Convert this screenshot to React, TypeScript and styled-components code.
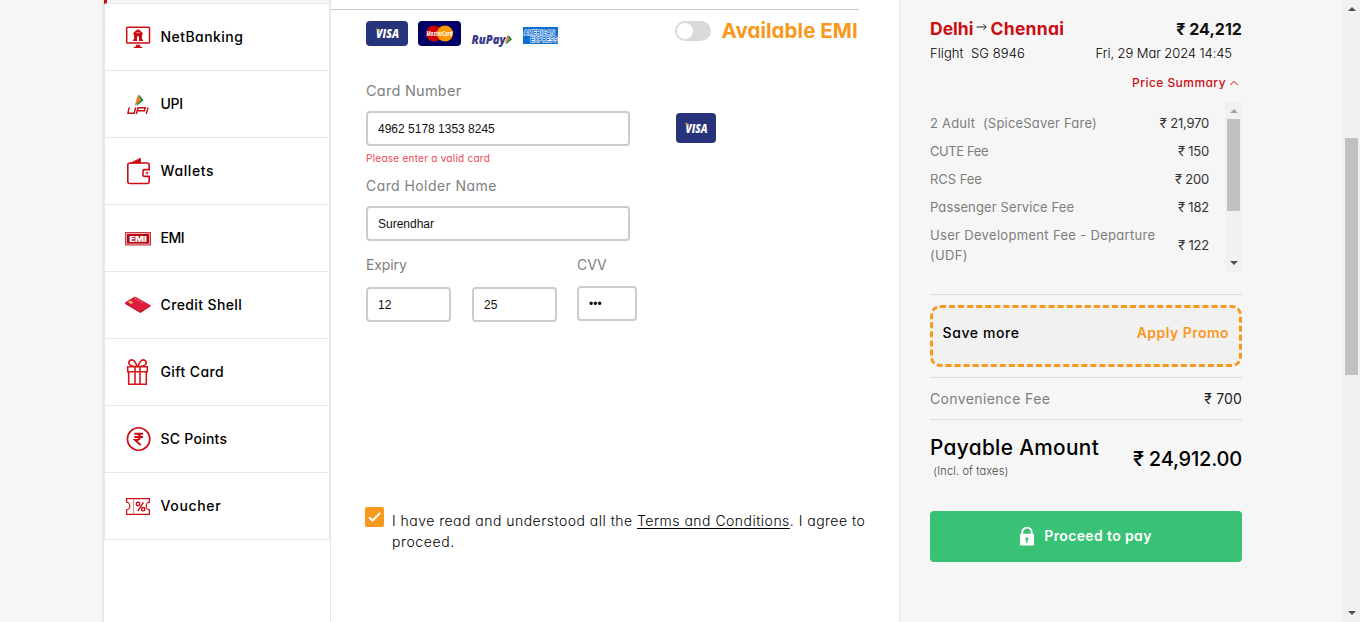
import React from "react";
import styled, { createGlobalStyle } from "styled-components";

const RED = "#cb0d14";
const ORANGE = "#f8981d";

const Global = createGlobalStyle`
  * { box-sizing: border-box; }
  html, body { margin: 0; padding: 0; overflow: hidden; }
  body {
    background: #f6f6f6;
    font-family: Inter, "Open Sans", sans-serif;
    font-feature-settings: "cv11";
    color: #222;
  }
  svg { overflow: visible; }
`;

const Text = styled.span<{
  $size?: number;
  $weight?: number;
  $color?: string;
  $ls?: number;
  $lh?: number;
}>`
  display: inline-block;
  white-space: pre;
  font-size: ${(p) => p.$size ?? 14}px;
  font-weight: ${(p) => p.$weight ?? 400};
  color: ${(p) => p.$color ?? "#222"};
  letter-spacing: ${(p) => p.$ls ?? 0}px;
  line-height: ${(p) => p.$lh ?? 20}px;
`;

const Page = styled.div`
  display: flex;
  width: 1360px;
  height: 622px;
  padding-left: 102px;
  overflow: hidden;
`;

const Sidebar = styled.nav`
  flex: none;
  width: 229px;
  border-left: 2px solid #e8e8e8;
  border-right: 1px solid #e8e8e8;
  background: #fff;
`;

const ActiveTabEdge = styled.div`
  height: 4px;
  background: #f5f5f5;
  border-left: 3px solid ${RED};
  border-right: 1px solid #e8e8e8;
  border-bottom: 1px solid #e8e8e8;
`;

const NavItem = styled.a`
  display: flex;
  align-items: center;
  height: 67px;
  padding-left: 19px;
  border: solid #e8e8e8;
  border-width: 0 1px 1px;
`;

const NavIcon = styled.span`
  display: flex;
  width: 28px;
  height: 28px;
  margin-right: 8.5px;
`;

const Main = styled.main`
  flex: none;
  width: 568px;
  background: #fff;
`;

const TopRule = styled.hr`
  width: 528px;
  height: 1px;
  margin: 9px 0 0;
  border: 0;
  background: #ccc;
`;

const CardBrands = styled.div`
  display: flex;
  align-items: flex-start;
  height: 71px;
  padding: 11px 0 0 35px;
`;

const BrandSlot = styled.span<{ $gap: number; $top?: number }>`
  display: flex;
  margin: ${(p) => p.$top ?? 0}px ${(p) => p.$gap}px 0 0;
`;

const Toggle = styled.span`
  display: flex;
  width: 36px;
  height: 20px;
  padding: 2px;
  margin-right: 10.5px;
  border-radius: 10px;
  background: #d9d9d9;
  &::after {
    content: "";
    width: 16px;
    height: 16px;
    border-radius: 50%;
    background: #fff;
  }
`;

const Form = styled.form`
  display: flex;
  flex-direction: column;
  height: 426px;
  padding-left: 35px;
`;

const Row = styled.div<{ $mt?: number; $gap?: number; $align?: string }>`
  display: flex;
  align-items: ${(p) => p.$align ?? "center"};
  margin-top: ${(p) => p.$mt ?? 0}px;
  gap: ${(p) => p.$gap ?? 0}px;
`;

const Field = styled.input<{ $w: number }>`
  width: ${(p) => p.$w}px;
  height: 35px;
  padding: 0 10px;
  border: 2px solid #ccc;
  border-radius: 4px;
  background: #fff;
  font: 12px "Liberation Sans", Arial, sans-serif;
  color: #111;
  outline: none;
`;

const Column = styled.label<{ $gap: number; $ml?: number }>`
  display: flex;
  flex-direction: column;
  gap: ${(p) => p.$gap}px;
  margin-left: ${(p) => p.$ml ?? 0}px;
`;

const ErrorText = styled.p`
  margin: 6px 0 0;
  font-size: 10px;
  line-height: 13px;
  letter-spacing: 0.25px;
  color: #ee4653;
`;

const Consent = styled.div`
  display: flex;
  padding-left: 34px;
`;

const CheckBox = styled.span`
  display: flex;
  align-items: center;
  justify-content: center;
  width: 19px;
  height: 20px;
  margin-right: 8px;
  border-radius: 2px;
  background: ${ORANGE};
`;

const ConsentLines = styled.div`
  display: flex;
  flex-direction: column;
  padding-top: 3px;
`;

const Link = styled.a`
  text-decoration: underline;
  text-underline-offset: 2px;
`;

const Summary = styled.aside`
  flex: 1;
  border-left: 1px solid #e6e6e6;
  padding: 18px 0 0 30px;
`;

const SummaryInner = styled.div`
  display: flex;
  flex-direction: column;
  width: 313px;
  padding-right: 1px;
`;

const Between = styled.div<{ $h: number; $pr?: number; $mt?: number }>`
  display: flex;
  justify-content: space-between;
  align-items: center;
  height: ${(p) => p.$h}px;
  margin-top: ${(p) => p.$mt ?? 0}px;
  padding-right: ${(p) => p.$pr ?? 0}px;
`;

const PriceToggle = styled.div`
  display: flex;
  justify-content: flex-end;
  align-items: center;
  gap: 4px;
  height: 20px;
  margin-top: 10px;
  padding-right: 4px;
`;

const FareBox = styled.div`
  display: flex;
  height: 170px;
  margin-top: 9px;
`;

const FareList = styled.div`
  flex: 1;
  padding: 7px 16px 0 0;
`;

const ScrollTrack = styled.div<{ $h: number }>`
  display: flex;
  flex-direction: column;
  flex: none;
  align-items: center;
  width: 17px;
  height: ${(p) => p.$h}px;
  background: #f1f1f1;
`;

const ScrollArrow = styled.span<{ $down?: boolean; $color?: string }>`
  display: flex;
  align-items: center;
  justify-content: center;
  flex: none;
  width: 17px;
  height: 17px;
  padding-bottom: ${(p) => (p.$down ? 2 : 0)}px;
  &::after {
    content: "";
    border: solid transparent;
    border-width: ${(p) => (p.$down ? "4px 4px 0" : "0 4px 4px")};
    ${(p) => (p.$down ? "border-top-color" : "border-bottom-color")}: ${(p) => p.$color ?? "#505050"};
  }
`;

const ScrollThumb = styled.span<{ $top: number; $h: number }>`
  width: 13px;
  height: ${(p) => p.$h}px;
  margin: ${(p) => p.$top}px 0 auto;
  background: #c1c1c1;
`;

const Rule = styled.div<{ $mt: number }>`
  height: 1px;
  margin-top: ${(p) => p.$mt}px;
  background: #ddd;
`;

const Promo = styled.div`
  display: flex;
  justify-content: space-between;
  height: 62px;
  margin-top: 10px;
  padding: 15px 10px 0 9.5px;
  border: 3px dashed ${ORANGE};
  border-radius: 10px;
  background: #f1f1f1;
`;

const Payable = styled.div`
  display: flex;
  flex-direction: column;
`;

const PayButton = styled.button`
  display: flex;
  align-items: center;
  justify-content: center;
  gap: 10px;
  height: 51px;
  margin-top: 30px;
  padding: 0 0 1px;
  border: 0;
  border-radius: 4px;
  background: #39c275;
  font-family: inherit;
  font-feature-settings: inherit;
`;

const NetBankingIcon = () => (
  <svg width="28" height="28" viewBox="0 0 28 28" fill="none" stroke={RED}>
    <rect x="2.7" y="4.2" width="22.8" height="15.8" rx="0.8" strokeWidth="1.5" />
    <path d="M11 23.500h6l2 1.500H9z M12 21.800h4v2h-4z" fill={RED} stroke="none" />
    <path d="M9.300 10 12 7.500q2-2 4 0l2.700 2.500v1.400H18v5.200h1v1.400h-4v-4.400h-2v4.400H9v-1.400h1v-5.200h-.7z" fill={RED} stroke="none" />
    <path d="M12.300 9.700h3.400" stroke="#f3b9bb" strokeWidth="0.800" />
  </svg>
);

const UpiIcon = () => (
  <svg width="28" height="28" viewBox="0 0 28 28" fill="none">
    <path d="M15.200 4.800 19.600 10.200 12.500 16z" fill="#0b8a4c" />
    <path d="M14 4.600 17.200 10 10.600 16z" fill="#f37a1f" />
    <path d="M5.200 17.300 3.900 23.200h6.300l1.500-5.900M12.300 24l1.700-6.200h7.200l-.8 3h-6.800M24 17.300l-1.700 6.700" stroke={RED} strokeWidth="1.400" />
  </svg>
);

const WalletIcon = () => (
  <svg width="28" height="28" viewBox="0 0 28 28" fill="none" stroke={RED} strokeWidth="1.600">
    <path d="M25.200 12.300V8a2 2 0 0 0-2-2H5.800a2 2 0 0 0-2 2v16.500a2 2 0 0 0 2 2h17.400a2 2 0 0 0 2-2v-5.200" />
    <path d="M26 12.600h-5.500a1.500 1.500 0 0 0-1.500 1.500v3.800a1.500 1.500 0 0 0 1.500 1.500H26" />
    <path d="M6.800 6 16.500 1.200V6z" fill={RED} strokeWidth="0.800" />
    <circle cx="23" cy="16.100" r="0.900" strokeWidth="1" />
  </svg>
);

const EmiIcon = () => (
  <svg width="28" height="28" viewBox="0 0 28 28">
    <rect x="1" y="8" width="26" height="13.500" fill="#c63742" />
    <rect x="2.500" y="9.500" width="23" height="10.500" fill="#b60613" stroke="#f4c9cc" strokeWidth="0.800" />
    <text x="14" y="17.600" textAnchor="middle" fontFamily="Inter" fontWeight="900" fontSize="7.800" fill="#fff" textLength="17.500" lengthAdjust="spacingAndGlyphs">EMI</text>
  </svg>
);

const CreditShellIcon = () => (
  <svg width="28" height="28" viewBox="0 0 28 28">
    <path d="M1 11.800 11 6l16 9-9.700 6.500q-.8.500-1.800 0L1.600 13.200z" fill="#b80e2b" />
    <path d="M1 11.500 10 6q1-.5 2 0l15 8.600-9.800 5.900q-.8.500-1.800 0z" fill="#df1d3e" />
    <path d="m4.100 11 2.200-1.300 3 1.700-2.200 1.500z" fill="#f3c65a" />
    <path d="m11 7.300 1.600.9M14 9l1.600.9M17 10.700l1.600.9" stroke="#f5a8b5" strokeWidth="0.900" />
  </svg>
);

const GiftIcon = () => (
  <svg width="28" height="28" viewBox="0 0 28 28" fill="none" stroke="#d4181e" strokeWidth="1.600">
    <path d="M3.700 8.700h19.600v5H3.700zM4.700 13.700h17.600v12.600H4.700z" />
    <path d="M11 8.700v17.600M16 8.700v17.600" />
    <path d="M13 8.500C5 8.500 3.500 5 5.800 2.600c2.400-2 5.600 0 7.400 5.900M14 8.500c8 0 9.500-3.500 7.200-5.900-2.400-2-5.600 0-7.400 5.900" />
  </svg>
);

const PointsIcon = () => (
  <svg width="28" height="28" viewBox="0 0 28 28" fill="none" stroke={RED}>
    <circle cx="14.600" cy="14" r="11.200" strokeWidth="1.600" />
    <path d="M10.300 8.800h8.800M10.300 12h8.800M11 8.800h1.600c4.400 0 4.400 6.200 0 6.200H11l5.600 5" strokeWidth="1.900" />
  </svg>
);

const VoucherIcon = () => (
  <svg width="28" height="28" viewBox="0 0 28 28" fill="none" stroke={RED}>
    <path d="M2.600 6.600h22.800v3.600a3.200 3.800 0 0 0 0 7.600v4.600H2.600v-4.600a3.200 3.800 0 0 0 0-7.600z" strokeWidth="1.200" />
    <path d="M9.500 6.800v15.400" strokeWidth="0.900" stroke="#e77a7e" />
    <circle cx="14" cy="12" r="1.700" strokeWidth="1.400" />
    <circle cx="19.200" cy="17.200" r="1.700" strokeWidth="1.400" />
    <path d="M19.400 10.300 13.800 19" strokeWidth="1.400" />
  </svg>
);

const Visa = ({ w, h }: { w: number; h: number }) => (
  <svg width={w} height={h} viewBox={`0 0 ${w} ${h}`}>
    <rect width={w} height={h} rx="4" fill="#27337a" />
    <text x={w / 2 + 0.5} y={h / 2 + 4.7} textAnchor="middle" fontFamily="Open Sans" fontStyle="italic" fontWeight="800" fontSize={w > 40 ? 12.5 : 13} fill="#fff" textLength={w > 40 ? 23 : 22} lengthAdjust="spacingAndGlyphs">VISA</text>
    <path d={`M${w / 2 - 11.5} ${h / 2 - 4.7}h3.200q1 0 1.200 2.200l.3 2q-1.500-3-4.700-4.200z`} fill="#f5a13a" />
  </svg>
);

const MasterCard = () => (
  <svg width="43" height="25" viewBox="0 0 43 25">
    <rect width="43" height="25" rx="4" fill="#000066" />
    <circle cx="16" cy="12.500" r="8" fill="#cc0000" />
    <circle cx="27" cy="12.500" r="8" fill="#ff9900" />
    <text x="21.500" y="15.300" textAnchor="middle" fontFamily="Open Sans" fontStyle="italic" fontWeight="700" fontSize="7" fill="#fff" textLength="26" lengthAdjust="spacingAndGlyphs">MasterCard</text>
  </svg>
);

const RuPay = () => (
  <svg width="42" height="16" viewBox="0 0 42 16">
    <text x="0.500" y="11.500" fontFamily="Open Sans" fontStyle="italic" fontWeight="800" fontSize="11.500" fill="#343a8c" textLength="34" lengthAdjust="spacingAndGlyphs">RuPay</text>
    <path d="M37.800 3 41 7.600l-6 4.700z" fill="#0f8a50" />
    <path d="M36.400 3 38.600 7.600 34 12.300z" fill="#f27a25" />
  </svg>
);

const Amex = () => (
  <svg width="35" height="17" viewBox="0 0 35 17">
    <rect width="35" height="17" fill="#0f6fcf" />
    <g fontFamily="Liberation Sans" fontWeight="700" fontSize="7" fill="#0f6fcf" stroke="#fff" strokeWidth="1.200" paintOrder="stroke">
      <text x="0.800" y="7.800" textLength="31" lengthAdjust="spacingAndGlyphs">AMERICAN</text>
      <text x="7.500" y="14.800" textLength="27" lengthAdjust="spacingAndGlyphs">EXPRESS</text>
    </g>
  </svg>
);

const LockIcon = () => (
  <svg width="14" height="19" viewBox="0 0 14 19">
    <path d="M2.300 8V5.300a4.700 4.700 0 0 1 9.400 0V8" fill="none" stroke="#fff" strokeWidth="1.900" />
    <rect y="6.800" width="14" height="11.700" rx="1.300" fill="#fff" />
    <path d="M5.200 10.700h3.200v2.100h-.8v3H6v-3h-.8z" fill="#39c275" />
  </svg>
);

const navItems: { label: string; icon: React.ReactNode; ls: number }[] = [
  { label: "NetBanking", icon: <NetBankingIcon />, ls: 0.45 },
  { label: "UPI", icon: <UpiIcon />, ls: -0.35 },
  { label: "Wallets", icon: <WalletIcon />, ls: 0.6 },
  { label: "EMI", icon: <EmiIcon />, ls: -0.45 },
  { label: "Credit Shell", icon: <CreditShellIcon />, ls: 0.38 },
  { label: "Gift Card", icon: <GiftIcon />, ls: 0.4 },
  { label: "SC Points", icon: <PointsIcon />, ls: 0.25 },
  { label: "Voucher", icon: <VoucherIcon />, ls: 0.65 },
];

const fares = [
  { label: "2 Adult  (SpiceSaver Fare)", price: "₹ 21,970", ls: 0.2 },
  { label: "CUTE Fee", price: "₹ 150", ls: -0.4 },
  { label: "RCS Fee", price: "₹ 200", ls: -0.05 },
  { label: "Passenger Service Fee", price: "₹ 182", ls: 0.12 },
  { label: "User Development Fee - Departure\n(UDF)", price: "₹ 122", ls: 0.32 },
];

export default function App() {
  return (
    <>
      <Global />
      <Page>
        <Sidebar>
          <ActiveTabEdge />
          {navItems.map((n) => (
            <NavItem key={n.label}>
              <NavIcon>{n.icon}</NavIcon>
              <Text $weight={500} $color="#000" $ls={n.ls}>{n.label}</Text>
            </NavItem>
          ))}
        </Sidebar>

        <Main>
          <TopRule />
          <CardBrands>
            <BrandSlot $gap={10}><Visa w={42} h={25} /></BrandSlot>
            <BrandSlot $gap={10}><MasterCard /></BrandSlot>
            <BrandSlot $gap={10} $top={11}><RuPay /></BrandSlot>
            <BrandSlot $gap={117} $top={6}><Amex /></BrandSlot>
            <Toggle />
            <Text $size={20.5} $weight={700} $color={ORANGE} $ls={0.05}>Available EMI</Text>
          </CardBrands>

          <Form>
            <Text $size={14.5} $color="#808080" $ls={0.25}>Card Number</Text>
            <Row $mt={10} $gap={46} $align="flex-start">
              <Field $w={264} defaultValue="4962 5178 1353 8245" />
              <BrandSlot $gap={0} $top={2}><Visa w={40} h={30} /></BrandSlot>
            </Row>
            <ErrorText>Please enter a valid card</ErrorText>
            <Row $mt={11}><Text $color="#808080" $ls={0.42}>Card Holder Name</Text></Row>
            <Row $mt={10}><Field $w={264} defaultValue="Surendhar" /></Row>
            <Row $mt={14} $align="flex-start">
              <Column $gap={12}>
                <Text $color="#808080" $ls={-0.1}>Expiry</Text>
                <Row $gap={21}>
                  <Field $w={85} defaultValue="12" />
                  <Field $w={85} defaultValue="25" />
                </Row>
              </Column>
              <Column $gap={11} $ml={20}>
                <Text $color="#808080">CVV</Text>
                <Field $w={60} type="password" defaultValue="123" />
              </Column>
            </Row>
          </Form>

          <Consent>
            <CheckBox>
              <svg width="13" height="12" viewBox="0 0 13 12" fill="none" stroke="#fff" strokeWidth="2">
                <path d="M1 6.300 4.600 9.700 12 2" />
              </svg>
            </CheckBox>
            <ConsentLines>
              <Text $lh={21} $ls={0.48} $weight={300} $color="#000">
                I have read and understood all the <Link>Terms and Conditions</Link>. I agree to
              </Text>
              <Text $lh={21} $ls={0.6} $weight={300} $color="#000">proceed.</Text>
            </ConsentLines>
          </Consent>
        </Main>

        <Summary>
          <SummaryInner>
            <Between $h={22}>
              <Row $gap={3}>
                <Text $size={17.5} $weight={700} $color={RED} $ls={0}>Delhi</Text>
                <svg width="11" height="16" viewBox="0 0 11 16" fill="none" stroke="#222">
                  <path d="M0.500 6h9.500M7.500 3.300 10.200 6 7.500 8.700" />
                </svg>
                <Text $size={17.5} $weight={700} $color={RED} $ls={0.3}>Chennai</Text>
              </Row>
              <Text $size={16} $weight={700} $color="#111" $ls={0.05}>₹ 24,212</Text>
            </Between>
            <Between $h={20} $mt={3} $pr={10}>
              <Text $size={13} $weight={300} $color="#000" $ls={0.08}>Flight  SG 8946</Text>
              <Text $size={13} $weight={300} $color="#000" $ls={-0.08}>Fri, 29 Mar 2024 14:45</Text>
            </Between>
            <PriceToggle>
              <Text $size={12} $weight={500} $color={RED} $ls={0.45}>Price Summary</Text>
              <svg width="8" height="6" viewBox="0 0 8 6" fill="none" stroke={RED}>
                <path d="M0.300 5 4 1.300 7.700 5" />
              </svg>
            </PriceToggle>
            <FareBox>
              <FareList>
                {fares.map((f) => (
                  <Between key={f.label} $h={f.label.includes("\n") ? 48 : 28}>
                    <Text $size={13} $color="#7d7d7d" $ls={f.ls}>{f.label}</Text>
                    <Text $size={13} $color="#333" $ls={-0.2}>{f.price}</Text>
                  </Between>
                ))}
              </FareList>
              <ScrollTrack $h={170}>
                <ScrollArrow $color="#a3a3a3" />
                <ScrollThumb $top={0} $h={92} />
                <ScrollArrow $down />
              </ScrollTrack>
            </FareBox>
            <Rule $mt={22} />
            <Promo>
              <Text $weight={500} $color="#000" $ls={0.6}>Save more</Text>
              <Text $weight={600} $color={ORANGE} $ls={0.47}>Apply Promo</Text>
            </Promo>
            <Rule $mt={10} />
            <Between $h={41}>
              <Text $color="#7d7d7d" $ls={0.37} $lh={23}>Convenience Fee</Text>
              <Text $size={14} $color="#222" $ls={0.15} $lh={23}>₹ 700</Text>
            </Between>
            <Rule $mt={0} />
            <Between $h={44} $mt={17}>
              <Payable>
                <Text $size={20.8} $weight={500} $color="#000" $ls={0.35} $lh={24}>Payable Amount</Text>
                <Text $size={11} $weight={300} $color="#444" $ls={0.15} $lh={22}> (Incl. of taxes)</Text>
              </Payable>
              <Text $size={20} $weight={500} $color="#000" $ls={-0.2} $lh={22}>₹ 24,912.00</Text>
            </Between>
            <PayButton>
              <LockIcon />
              <Text $weight={600} $color="#fff" $ls={0.37}>Proceed to pay</Text>
            </PayButton>
          </SummaryInner>
        </Summary>

        <ScrollTrack $h={622}>
          <ScrollArrow />
          <ScrollThumb $top={121} $h={237} />
          <ScrollArrow $down />
        </ScrollTrack>
      </Page>
    </>
  );
}
